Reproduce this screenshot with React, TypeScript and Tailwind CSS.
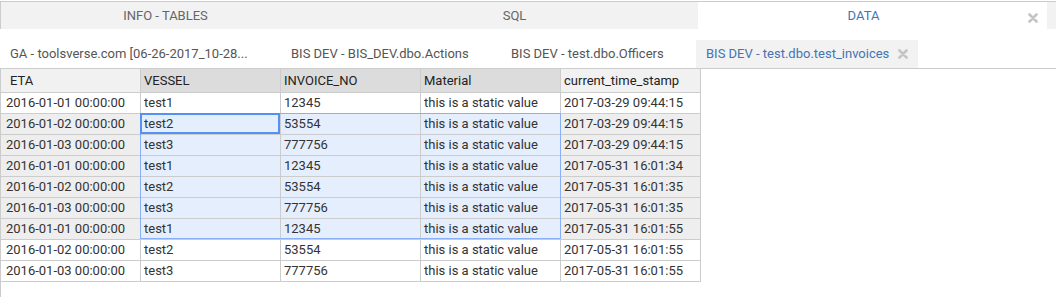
import React from "react";

const rows = [
  ["2016-01-01 00:00:00", "test1", "12345", "this is a static value", "2017-03-29 09:44:15"],
  ["2016-01-02 00:00:00", "test2", "53554", "this is a static value", "2017-03-29 09:44:15"],
  ["2016-01-03 00:00:00", "test3", "777756", "this is a static value", "2017-03-29 09:44:15"],
  ["2016-01-01 00:00:00", "test1", "12345", "this is a static value", "2017-05-31 16:01:34"],
  ["2016-01-02 00:00:00", "test2", "53554", "this is a static value", "2017-05-31 16:01:35"],
  ["2016-01-03 00:00:00", "test3", "777756", "this is a static value", "2017-05-31 16:01:35"],
  ["2016-01-01 00:00:00", "test1", "12345", "this is a static value", "2017-05-31 16:01:55"],
  ["2016-01-02 00:00:00", "test2", "53554", "this is a static value", "2017-05-31 16:01:55"],
  ["2016-01-03 00:00:00", "test3", "777756", "this is a static value", "2017-05-31 16:01:55"],
];

const headers = ["ETA", "VESSEL", "INVOICE_NO", "Material", "current_time_stamp"];

function CloseX() {
  return (
    <svg width="10" height="10" viewBox="0 0 10 10">
      <path d="M1.5 1.5 L8.5 8.5 M8.5 1.5 L1.5 8.5" stroke="#c4c4c4" strokeWidth="2.6" strokeLinecap="round" />
    </svg>
  );
}

export default function App() {
  return (
    <div className="w-[1056px] h-[297px] bg-white overflow-hidden pt-px font-['Roboto',sans-serif] text-[13px]">
      {/* Top tabs */}
      <div className="flex h-[28px] border-t border-l border-[#cccccc]">
        <div className="w-[348px] bg-[#f2f2f2] flex items-center justify-center pr-[19px] text-[#666666]">INFO - TABLES</div>
        <div className="w-[349px] bg-[#f2f2f2] flex items-center justify-center pr-[18px] text-[#666666]">SQL</div>
        <div className="w-[349px] bg-white relative flex items-center justify-center pr-[18px] text-[#4474b3]">
          DATA
          <div className="absolute right-[9px] top-[11px] flex">
            <CloseX />
          </div>
        </div>
        <div className="flex-1 bg-[#f2f2f2]" />
      </div>

      {/* Sub tabs */}
      <div className="mt-[11px] flex h-[28px]">
        <div className="w-[281px] pl-[10px] flex items-center text-[#555555] whitespace-nowrap">GA - toolsverse.com [06-26-2017_10-28...</div>
        <div className="w-[220px] pl-[10px] flex items-center text-[#555555] whitespace-nowrap">BIS DEV - BIS_DEV.dbo.Actions</div>
        <div className="w-[195px] pl-[10px] flex items-center text-[#555555] whitespace-nowrap">BIS DEV - test.dbo.Officers</div>
        <div className="w-[222px] pl-[10px] bg-[#f2f2f2] flex items-center gap-[9px] text-[#4474b3] whitespace-nowrap">
          BIS DEV - test.dbo.test_invoices
          <CloseX />
        </div>
      </div>

      {/* Grid */}
      <div className="border-t border-l border-[#cccccc] h-[240px]">
        <div className="relative w-[700px]">
          <div className="flex h-[24px]">
            {headers.map((h, i) => (
              <div
                key={h}
                className={
                  "w-[140px] border-r border-b border-[#cccccc] flex items-center text-[#222222] whitespace-nowrap " +
                  (i === 0 ? "pl-[9px] " : "pl-[3px] ") +
                  (i >= 1 && i <= 3 ? "bg-[#dcdcdc]" : "bg-[#f1f1f1]")
                }
              >
                {h}
              </div>
            ))}
          </div>
          {rows.map((r, ri) => {
            const sel = ri >= 1 && ri <= 6;
            return (
              <div key={ri} className="flex h-[21px]">
                {r.map((c, ci) => {
                  let bg = "bg-white";
                  if (sel) bg = ci >= 1 && ci <= 3 ? "bg-[#e5eefd]" : "bg-[#eeeeee]";
                  return (
                    <div
                      key={ci}
                      className={
                        "w-[140px] border-r border-b border-[#cccccc] flex items-center text-[#333333] whitespace-nowrap " +
                        (ci === 0 ? "pl-[5px] " : "pl-[3px] ") +
                        bg
                      }
                    >
                      {c}
                    </div>
                  );
                })}
              </div>
            );
          })}
          {/* area selection border */}
          <div className="absolute left-[139px] top-[44px] w-[421px] h-[126px] border border-[#89aff9] pointer-events-none" />
          {/* current cell */}
          <div className="absolute left-[139px] top-[44px] w-[140px] h-[21px] border-2 border-[#5292f7] pointer-events-none" />
        </div>
      </div>
    </div>
  );
}
